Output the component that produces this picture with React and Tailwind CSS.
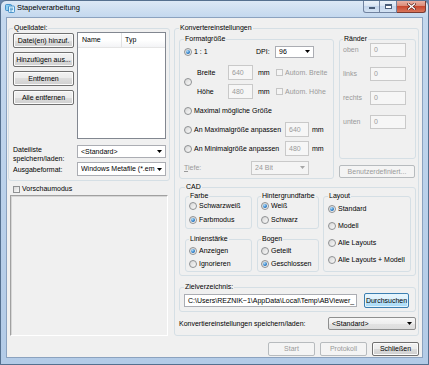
import React from 'react';

const Arrow = ({ disabled }) => (
  <svg width="5" height="3" viewBox="0 0 5 3" className="shrink-0">
    <path d="M0 0h5L2.5 3z" fill={disabled ? '#a6a6a6' : '#000'} />
  </svg>
);

const Radio = ({ checked }) => (
  <span className="flex h-[8px] w-[8px] shrink-0 items-center justify-center rounded-full border border-[#8f9193] bg-[linear-gradient(135deg,#d6d6d6,#fafafa)]">
    {checked && (
      <span className="h-[4px] w-[4px] rounded-full bg-[radial-gradient(circle_at_35%_30%,#b5e0fb,#2a7cc7_60%,#1a4f8f)]" />
    )}
  </span>
);

const Check = ({ disabled }) => (
  <span
    className={
      disabled
        ? 'h-[7px] w-[7px] shrink-0 border border-[#c5c5c5] bg-[#f4f4f4]'
        : 'h-[7px] w-[7px] shrink-0 border border-[#8f9193] bg-[linear-gradient(135deg,#d9d9d9,#fbfbfb)]'
    }
  />
);

const Option = ({ label, checked, className = '' }) => (
  <div className={`flex items-center gap-[2px] ${className}`}>
    <Radio checked={checked} />
    <span className="whitespace-nowrap">{label}</span>
  </div>
);

const Button = ({ children, className = '', disabled, focused }) => {
  let look =
    'border-[#707070] bg-[linear-gradient(#f2f2f2,#ebebeb_50%,#dddddd_50%,#cfcfcf)] shadow-[inset_0_0_0_1px_#fbfbfb]';
  if (disabled) look = 'border-[#b7bbbe] bg-[#f4f4f4] text-[#9a9a9a]';
  if (focused)
    look =
      'border-[#3c7fb1] bg-[linear-gradient(#eaf6fd,#d9f0fc_50%,#bee6fd_50%,#a7d9f5)] shadow-[inset_0_0_0_1px_#e5f4fc]';
  return (
    <div className={`flex items-center justify-center whitespace-nowrap rounded-[2px] border ${look} ${className}`}>
      {children}
    </div>
  );
};

const Combo = ({ value, className = '', disabled, plain }) => {
  let look = 'border-[#8e8f8f] bg-[linear-gradient(#f7f7f7,#eeeeee_50%,#e3e3e3_50%,#dcdcdc)] rounded-[2px]';
  if (plain) look = 'border-[#abadb3] bg-white';
  if (disabled) look = 'border-[#c9c9c9] bg-[#f4f4f4] text-[#9a9a9a]';
  return (
    <div className={`flex items-center justify-between border pl-[3px] pr-[3px] ${look} ${className}`}>
      <span className="overflow-hidden whitespace-nowrap">{value}</span>
      <Arrow disabled={disabled} />
    </div>
  );
};

const Field = ({ value, className = '', disabled }) => (
  <div
    className={`flex items-center overflow-hidden whitespace-nowrap border px-[3px] ${
      disabled ? 'border-[#c9c9c9] bg-[#f6f6f6] text-[#9a9a9a]' : 'border-[#abadb3] bg-white'
    } ${className}`}
  >
    {value}
  </div>
);

const Group = ({ label, className = '', children }) => (
  <fieldset className={`min-w-0 rounded-[3px] border border-[#d5dfe5] ${className}`}>
    <legend className="px-[1px] leading-[8px]">{label}</legend>
    {children}
  </fieldset>
);

const AppIcon = () => (
  <svg width="10" height="10" viewBox="0 0 10 10">
    <rect x="0.5" y="1.5" width="6" height="6" rx="1" fill="#8fd0f2" stroke="#2b7fc0" strokeWidth="0.8" />
    <rect x="3.5" y="3" width="6" height="6.5" rx="1" fill="#d9f1fc" stroke="#2b7fc0" strokeWidth="0.8" />
    <path d="M5 5.2h3M5 6.6h3M5 8h2" stroke="#2b7fc0" strokeWidth="0.7" />
  </svg>
);

export default function App() {
  return (
    <div className="h-[365px] w-[429px] overflow-hidden bg-[#6a87ad] font-['Liberation_Sans',Arial,sans-serif] text-[7px] leading-[8px] text-black">
      <div className="h-full w-full rounded-t-[6px] border border-[#55708f] bg-[linear-gradient(180deg,#dce8f5,#c4d8ee_16px,#b9d0ea_60%,#b3cbe7)]">
        {/* title bar */}
        <div className="flex h-[16px] items-start justify-between">
          <div className="flex h-[14px] items-center gap-[2px] pl-[4px]">
            <AppIcon />
            <span className="text-[7.5px]">Stapelverarbeitung</span>
          </div>
          <div className="mr-[2px] flex">
            <div className="flex h-[12px] w-[34px] rounded-bl-[3px] border border-t-0 border-[#7183a0] bg-[linear-gradient(#eaf1f9,#d7e3f2_50%,#c3d5eb_50%,#d3e2f3)]">
              <div className="flex w-1/2 items-end justify-center border-r border-[#7183a0] pb-[3px]">
                <span className="h-[2px] w-[6px] border border-[#4a5d78] bg-white" />
              </div>
              <div className="flex w-1/2 items-center justify-center">
                <span className="h-[5px] w-[7px] border border-t-2 border-[#4a5d78] bg-white" />
              </div>
            </div>
            <div className="flex h-[12px] w-[29px] items-center justify-center rounded-br-[3px] border border-l-0 border-t-0 border-[#7a3b33] bg-[linear-gradient(#eab1a4,#d98672_50%,#c8482f_50%,#d9765c)]">
              <svg width="9" height="7" viewBox="0 0 9 7">
                <path d="M1.5 1l6 5M7.5 1l-6 5" stroke="#5a2018" strokeWidth="2.6" strokeLinecap="square" />
                <path d="M1.5 1l6 5M7.5 1l-6 5" stroke="#fff" strokeWidth="1.4" strokeLinecap="square" />
              </svg>
            </div>
          </div>
        </div>

        {/* client area */}
        <div className="mx-[5px] flex h-[341px] w-[417px] flex-col border border-[#8ba2bf] bg-[#f0f0f0] pl-[1px] pr-[3px] pt-[6px]">
          <div className="flex gap-[4px]">
            {/* left column */}
            <div className="flex w-[162px] flex-col">
              <Group label="Quelldatei:" className="h-[157px] w-[162px] pl-[4px] pr-[3px]">
                <div className="flex gap-[3px]">
                  <div className="mt-[1px] flex w-[61px] flex-col gap-[4px]">
                    <Button className="h-[15px]">Datei(en) hinzuf.</Button>
                    <Button className="h-[15px]">Hinzufügen aus...</Button>
                    <Button className="h-[15px]">Entfernen</Button>
                    <Button className="h-[15px]">Alle entfernen</Button>
                  </div>
                  <div className="h-[107px] w-[89px] border border-[#828790] bg-white">
                    <div className="flex h-[15px] border-b border-[#e5e5e5] bg-[linear-gradient(#ffffff,#ffffff_50%,#f3f4f6)]">
                      <div className="flex w-[44px] items-center border-r border-[#e1e1e1] pl-[4px]">Name</div>
                      <div className="flex items-center pl-[3px]">Typ</div>
                    </div>
                  </div>
                </div>
                <div className="mt-[6px] flex">
                  <div className="flex w-[64px] flex-col leading-[9px]">
                    <span>Dateiliste</span>
                    <span>speichern/laden:</span>
                    <span className="mt-[2px]">Ausgabeformat:</span>
                  </div>
                  <div className="flex flex-col gap-[4px]">
                    <Combo plain value="<Standard>" className="h-[13px] w-[89px]" />
                    <Combo plain value="Windows Metafile (*.em" className="h-[14px] w-[89px]" />
                  </div>
                </div>
              </Group>
              <div className="ml-[5px] mt-[4px] flex h-[8px] items-center gap-[2px]">
                <Check />
                <span>Vorschaumodus</span>
              </div>
              <div className="ml-[2px] mt-[2px] h-[141px] w-[158px] border border-b-white border-l-[#a0a0a0] border-r-white border-t-[#a0a0a0] shadow-[inset_1px_1px_0_#d6d6d6]" />
            </div>

            {/* right column */}
            <Group label="Konvertereinstellungen" className="h-[312px] w-[247px] pl-[4px]">
              <div className="mt-[3px] flex gap-[5px]">
                <Group label="Formatgröße" className="h-[144px] w-[155px] pl-[4px]">
                  <div className="mt-[2px] flex h-[13px] items-center">
                    <Option label="1 : 1" checked className="w-[72px]" />
                    <span className="w-[19px]">DPI:</span>
                    <Combo plain value="96" className="h-[12px] w-[39px]" />
                  </div>
                  <div className="mt-[7px] flex items-center">
                    <div className="w-[13px]">
                      <Radio />
                    </div>
                    <div className="flex flex-col gap-[4px]">
                      <div className="flex h-[15px] items-center">
                        <span className="w-[31px]">Breite</span>
                        <Field disabled value="640" className="h-[15px] w-[25px]" />
                        <span className="ml-[5px] w-[18px]">mm</span>
                        <div className="flex items-center gap-[2px] text-[#9a9a9a]">
                          <Check disabled />
                          <span className="whitespace-nowrap">Autom. Breite</span>
                        </div>
                      </div>
                      <div className="flex h-[15px] items-center">
                        <span className="w-[31px]">Höhe</span>
                        <Field disabled value="480" className="h-[15px] w-[25px]" />
                        <span className="ml-[5px] w-[18px]">mm</span>
                        <div className="flex items-center gap-[2px] text-[#9a9a9a]">
                          <Check disabled />
                          <span className="whitespace-nowrap">Autom. Höhe</span>
                        </div>
                      </div>
                    </div>
                  </div>
                  <div className="mt-[4px] flex h-[15px] items-center">
                    <Option label="Maximal mögliche Größe" />
                  </div>
                  <div className="mt-[4px] flex h-[15px] items-center">
                    <Option label="An Maximalgröße anpassen" className="w-[101px]" />
                    <Field disabled value="640" className="h-[15px] w-[24px]" />
                    <span className="ml-[3px]">mm</span>
                  </div>
                  <div className="mt-[4px] flex h-[15px] items-center">
                    <Option label="An Minimalgröße anpassen" className="w-[101px]" />
                    <Field disabled value="480" className="h-[15px] w-[24px]" />
                    <span className="ml-[3px]">mm</span>
                  </div>
                  <div className="mt-[4px] flex h-[15px] items-center">
                    <span className="w-[67px] text-[#9a9a9a]">
                      <span className="underline">T</span>iefe:
                    </span>
                    <Combo disabled value="24 Bit" className="h-[14px] w-[58px]" />
                  </div>
                </Group>

                <div className="flex w-[77px] flex-col">
                  <Group label="Ränder" className="h-[124px] w-[77px] pl-[3px]">
                    <div className="flex flex-col gap-[10px]">
                      {['oben', 'links', 'rechts', 'unten'].map((l) => (
                        <div key={l} className="flex h-[14px] items-center">
                          <span className="w-[27px] text-[#9a9a9a]">{l}</span>
                          <Field disabled value="0" className="h-[14px] w-[36px]" />
                        </div>
                      ))}
                    </div>
                  </Group>
                  <Button disabled className="mt-[6px] h-[13px] w-[76px]">
                    Benutzerdefiniert...
                  </Button>
                </div>
              </div>

              <Group label="CAD" className="mt-[4px] h-[93px] w-[237px] pl-[5px]">
                <div className="flex">
                  <div className="flex w-[67px] flex-col">
                    <Group label="Farbe" className="mt-[1px] h-[37px] pl-[3px]">
                      <div className="mt-[1px] flex flex-col gap-[4px]">
                        <Option label="Schwarzweiß" className="h-[10px]" />
                        <Option label="Farbmodus" checked className="h-[10px]" />
                      </div>
                    </Group>
                    <Group label="Linienstärke" className="mt-[6px] h-[37px] pl-[3px]">
                      <div className="mt-[3px] flex flex-col gap-[3px]">
                        <Option label="Anzeigen" checked className="h-[10px]" />
                        <Option label="Ignorieren" className="h-[10px]" />
                      </div>
                    </Group>
                  </div>
                  <div className="ml-[5px] flex w-[62px] flex-col">
                    <Group label="Hintergrundfarbe" className="mt-[1px] h-[37px] pl-[3px]">
                      <div className="mt-[1px] flex flex-col gap-[4px]">
                        <Option label="Weiß" checked className="h-[10px]" />
                        <Option label="Schwarz" className="h-[10px]" />
                      </div>
                    </Group>
                    <Group label="Bogen" className="mt-[6px] h-[37px] pl-[3px]">
                      <div className="mt-[3px] flex flex-col gap-[3px]">
                        <Option label="Geteilt" className="h-[10px]" />
                        <Option label="Geschlossen" checked className="h-[10px]" />
                      </div>
                    </Group>
                  </div>
                  <Group label="Layout" className="ml-[4px] mt-[1px] h-[80px] w-[88px] pl-[4px]">
                    <div className="mt-[4px] flex flex-col gap-[7px]">
                      <Option label="Standard" checked className="h-[10px]" />
                      <Option label="Modell" className="h-[10px]" />
                      <Option label="Alle Layouts" className="h-[10px]" />
                      <Option label="Alle Layouts + Modell" className="h-[10px]" />
                    </div>
                  </Group>
                </div>
              </Group>

              <Group label="Zielverzeichnis:" className="mt-[7px] h-[29px] w-[237px] pl-[4px]">
                <div className="mt-[2px] flex h-[15px] items-center gap-[7px]">
                  <Field value="C:\Users\REZNIK~1\AppData\Local\Temp\ABViewer_" className="h-[13px] w-[173px]" />
                  <Button focused className="h-[15px] w-[45px]">
                    Durchsuchen
                  </Button>
                </div>
              </Group>

              <div className="mt-[5px] flex h-[13px] w-[237px] items-center justify-between">
                <span className="whitespace-nowrap">Konvertiereinstellungen speichern/laden:</span>
                <Combo value="<Standard>" className="h-[13px] w-[88px]" />
              </div>
            </Group>
          </div>

          <div className="mt-[6px] flex justify-end gap-[5px]">
            <Button disabled className="h-[14px] w-[47px]">
              Start
            </Button>
            <Button disabled className="h-[14px] w-[47px]">
              Protokoll
            </Button>
            <Button className="h-[14px] w-[47px]">Schließen</Button>
          </div>
        </div>
      </div>
    </div>
  );
}
